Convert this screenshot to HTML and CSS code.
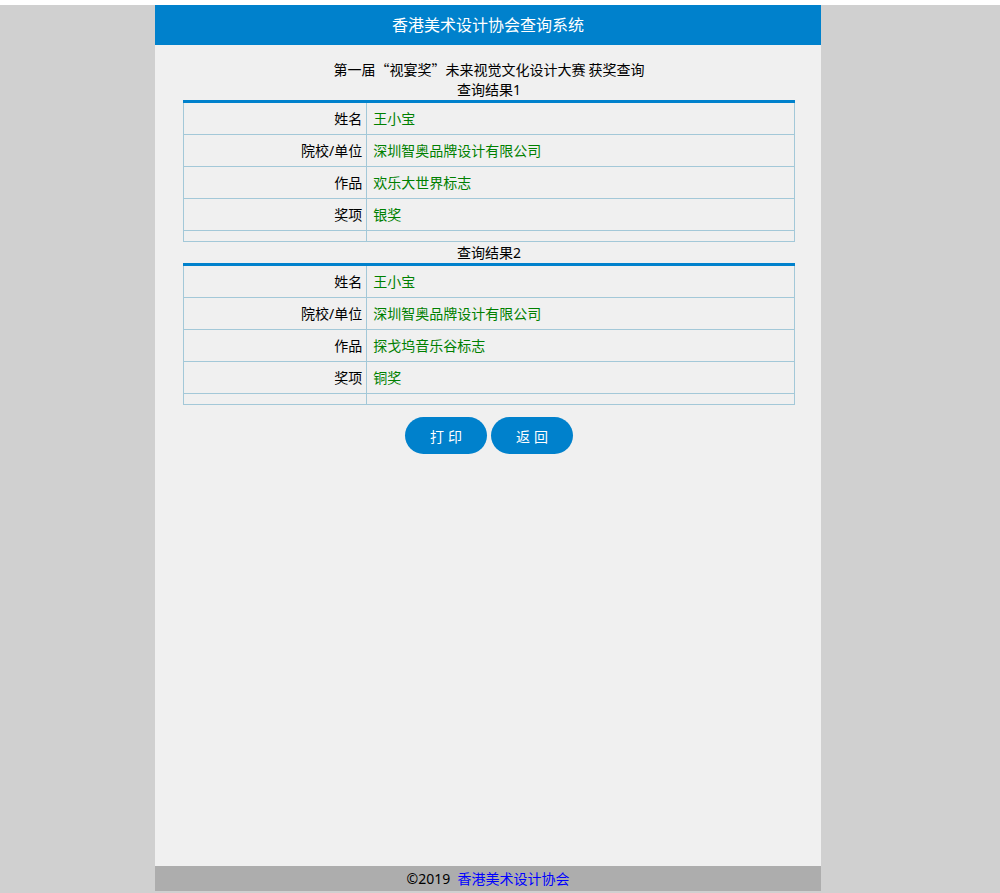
FILE: index.html
```html
<!DOCTYPE html>
<html lang="zh-CN">
<head>
<meta charset="utf-8">
<title>香港美术设计协会查询系统</title>
<link rel="stylesheet" href="styles.css">
</head>
<body>
<div class="page">
  <div class="container">
    <div class="header">香港美术设计协会查询系统</div>
    <div class="main">
      <div class="title">第一届“视宴奖”未来视觉文化设计大赛 获奖查询</div>
      <div class="caption">查询结果1</div>
      <table class="result">
        <tr><td class="label">姓名</td><td class="value">王小宝</td></tr>
        <tr><td class="label">院校/单位</td><td class="value">深圳智奥品牌设计有限公司</td></tr>
        <tr><td class="label">作品</td><td class="value">欢乐大世界标志</td></tr>
        <tr><td class="label">奖项</td><td class="value">银奖</td></tr>
        <tr class="empty"><td class="label"></td><td class="value"></td></tr>
      </table>
      <div class="caption">查询结果2</div>
      <table class="result">
        <tr><td class="label">姓名</td><td class="value">王小宝</td></tr>
        <tr><td class="label">院校/单位</td><td class="value">深圳智奥品牌设计有限公司</td></tr>
        <tr><td class="label">作品</td><td class="value">探戈坞音乐谷标志</td></tr>
        <tr><td class="label">奖项</td><td class="value">铜奖</td></tr>
        <tr class="empty"><td class="label"></td><td class="value"></td></tr>
      </table>
      <div class="actions">
        <button class="btn" type="button">打印</button>
        <button class="btn" type="button">返回</button>
      </div>
    </div>
    <div class="footer">©2019 &nbsp;<a href="#" class="footer-link">香港美术设计协会</a></div>
  </div>
</div>
</body>
</html>
```

FILE: styles.css
```css
html, body {
  margin: 0;
  padding: 0;
  background: #ffffff;
}
body {
  padding-top: 5px;
  font-family: "Noto Sans", "Noto Sans CJK SC", sans-serif;
  font-size: 14px;
  color: #000;
}
.page {
  background: #d0d0d0;
  height: 888px;
  padding-right: 24px;
}
.container {
  width: 666px;
  height: 886px;
  margin: 0 auto;
  background: #f0f0f0;
  display: flex;
  flex-direction: column;
}
.header {
  height: 40px;
  line-height: 40px;
  background: #0081cc;
  color: #fff;
  text-align: center;
  font-size: 16px;
}
.main {
  flex: 1;
  padding: 14px 26px 0 28px;
}
.title {
  text-align: center;
  line-height: 20px;
  height: 20px;
  font-family: "Noto Sans CJK SC", sans-serif;
}
.caption {
  text-align: center;
  line-height: 21px;
  height: 21px;
}
.result {
  width: 100%;
  border-collapse: collapse;
  border-top: 3px solid #0081cc;
}
.result td {
  border: 1px solid #a3c8d8;
  padding: 5px 0;
  line-height: 21px;
  height: 21px;
}
.result tr:first-child td {
  border-top: 0;
}
.result .empty td {
  height: 0;
  line-height: 0;
}
.result .label {
  width: 30%;
  text-align: right;
  padding-right: 4px;
}
.result .value {
  text-align: left;
  padding-left: 6px;
  color: #008000;
}
.actions {
  display: flex;
  justify-content: center;
  gap: 4px;
  margin-top: 12px;
}
.btn {
  width: 82px;
  height: 37px;
  border: 0;
  border-radius: 19px;
  background: #0081cc;
  color: #fff;
  font-family: inherit;
  font-size: 14px;
  letter-spacing: 4px;
  text-indent: 4px;
  padding: 0;
  cursor: pointer;
}
.footer {
  height: 25px;
  line-height: 25px;
  background: #adadad;
  text-align: center;
  color: #000;
}
.footer-link {
  color: #0000ff;
  text-decoration: none;
}
```
